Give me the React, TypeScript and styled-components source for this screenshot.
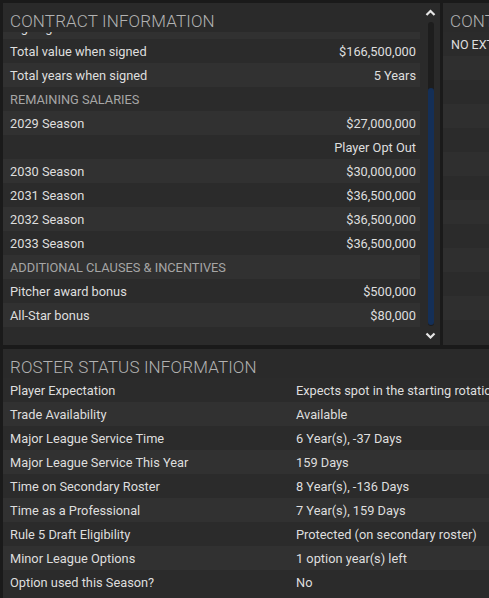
import React from 'react';
import styled, { createGlobalStyle } from 'styled-components';

const GlobalStyle = createGlobalStyle`
  html, body {
    margin: 0;
    padding: 0;
    background: #1a1a1a;
    font-family: Roboto, 'Liberation Sans', Arial, sans-serif;
    overflow: hidden;
  }
`;

const Screen = styled.div`
  width: 489px;
  height: 598px;
  display: flex;
  flex-direction: column;
  gap: 4px;
  padding: 3px 0 0 3px;
  box-sizing: border-box;
  overflow: hidden;
`;

const TopRow = styled.div`
  display: flex;
  gap: 3px;
  height: 342px;
  flex-shrink: 0;
`;

const Panel = styled.div<{ width?: number }>`
  background: #2b2b2b;
  display: flex;
  ${p => (p.width ? `width: ${p.width}px; flex-shrink: 0;` : 'flex: 1; min-width: 0;')}
  overflow: hidden;
`;

const PanelMain = styled.div`
  flex: 1;
  min-width: 0;
  display: flex;
  flex-direction: column;
`;

const Header = styled.div`
  height: 29px;
  box-sizing: border-box;
  flex-shrink: 0;
  display: flex;
  align-items: center;
  padding: 6px 0 0 7px;
  font-size: 17px;
  font-weight: 300;
  letter-spacing: 0.15px;
  color: #b2b2b2;
  white-space: nowrap;
  background: #2a2a2a;
`;

const Viewport = styled.div`
  height: 295px;
  overflow: hidden;
  flex-shrink: 0;
`;

const List = styled.div<{ offset?: number }>`
  margin-top: ${p => -(p.offset ?? 0)}px;
`;

const Row = styled.div<{ alt?: boolean }>`
  height: 24px;
  display: flex;
  align-items: center;
  padding: 0 4px 0 7px;
  background: ${p => (p.alt ? '#313131' : '#2b2b2b')};
  font-size: 12.8px;
  color: #dedede;
  white-space: nowrap;
`;

const Label = styled.span<{ section?: boolean }>`
  flex: 1;
  color: ${p => (p.section ? '#a6a6a6' : '#dedede')};
`;

const Value = styled.span`
  text-align: right;
`;

const RosterValue = styled.span`
  width: 189px;
  flex-shrink: 0;
  overflow: visible;
`;

const ScrollCol = styled.div`
  width: 20px;
  flex-shrink: 0;
  display: flex;
  flex-direction: column;
  align-items: center;
  background: #2a2a2a;
`;

const Arrow = styled.div`
  height: 19px;
  display: flex;
  align-items: center;
  justify-content: center;
  flex-shrink: 0;
`;

const Track = styled.div`
  flex: 1;
  width: 6px;
  margin-left: 1px;
  background: #1d1d1d;
  border-radius: 3px;
  display: flex;
  flex-direction: column;
`;

const Thumb = styled.div`
  margin-top: 66px;
  flex: 1;
  margin-bottom: 1px;
  background: #142f57;
  border-radius: 3px;
`;

const Chevron = ({ up }: { up?: boolean }) => (
  <svg width="11" height="7" viewBox="0 0 11 7">
    <path
      d={up ? 'M1.5 6 L5.5 2 L9.5 6' : 'M1.5 1.5 L5.5 5.5 L9.5 1.5'}
      fill="none"
      stroke="#e6e6e6"
      strokeWidth="2.2"
    />
  </svg>
);

const SideRow = styled.div<{ alt?: boolean }>`
  height: 24px;
  display: flex;
  align-items: center;
  padding-left: 8px;
  background: ${p => (p.alt ? '#2f2f2f' : '#2b2b2b')};
  font-size: 12.5px;
  color: #dedede;
  white-space: nowrap;
`;

const RosterPanel = styled.div`
  flex: 1;
  background: #2b2b2b;
  display: flex;
  flex-direction: column;
  overflow: hidden;
`;

type Item = { label: string; value?: string; section?: boolean };

const contract: Item[] = [
  { label: 'Signing bonus' },
  { label: 'Total value when signed', value: '$166,500,000' },
  { label: 'Total years when signed', value: '5 Years' },
  { label: 'REMAINING SALARIES', section: true },
  { label: '2029 Season', value: '$27,000,000' },
  { label: '', value: 'Player Opt Out' },
  { label: '2030 Season', value: '$30,000,000' },
  { label: '2031 Season', value: '$36,500,000' },
  { label: '2032 Season', value: '$36,500,000' },
  { label: '2033 Season', value: '$36,500,000' },
  { label: 'ADDITIONAL CLAUSES & INCENTIVES', section: true },
  { label: 'Pitcher award bonus', value: '$500,000' },
  { label: 'All-Star bonus', value: '$80,000' },
];

const roster: Item[] = [
  { label: 'Player Expectation', value: 'Expects spot in the starting rotation' },
  { label: 'Trade Availability', value: 'Available' },
  { label: 'Major League Service Time', value: '6 Year(s), -37 Days' },
  { label: 'Major League Service This Year', value: '159 Days' },
  { label: 'Time on Secondary Roster', value: '8 Year(s), -136 Days' },
  { label: 'Time as a Professional', value: '7 Year(s), 159 Days' },
  { label: 'Rule 5 Draft Eligibility', value: 'Protected (on secondary roster)' },
  { label: 'Minor League Options', value: '1 option year(s) left' },
  { label: 'Option used this Season?', value: 'No' },
];

export default function App() {
  return (
    <>
      <GlobalStyle />
      <Screen>
        <TopRow>
          <Panel width={437}>
            <PanelMain>
              <Header>CONTRACT INFORMATION</Header>
              <Viewport>
                <List offset={17}>
                  {contract.map((it, i) => (
                    <Row key={i} alt={i % 2 === 0}>
                      <Label section={it.section}>{it.label}</Label>
                      {it.value && <Value>{it.value}</Value>}
                    </Row>
                  ))}
                </List>
              </Viewport>
            </PanelMain>
            <ScrollCol>
              <Arrow><Chevron up /></Arrow>
              <Track><Thumb /></Track>
              <Arrow><Chevron /></Arrow>
            </ScrollCol>
          </Panel>
          <Panel>
            <PanelMain>
              <Header>CONTRACT EXTENSION</Header>
              <SideRow>NO EXTENSION</SideRow>
              {Array.from({ length: 11 }).map((_, i) => (
                <SideRow key={i} alt={i % 2 === 0} />
              ))}
            </PanelMain>
          </Panel>
        </TopRow>
        <RosterPanel>
          <Header>ROSTER STATUS INFORMATION</Header>
          {roster.map((it, i) => (
            <Row key={i} alt={i % 2 === 1}>
              <Label>{it.label}</Label>
              <RosterValue>{it.value}</RosterValue>
            </Row>
          ))}
        </RosterPanel>
      </Screen>
    </>
  );
}
